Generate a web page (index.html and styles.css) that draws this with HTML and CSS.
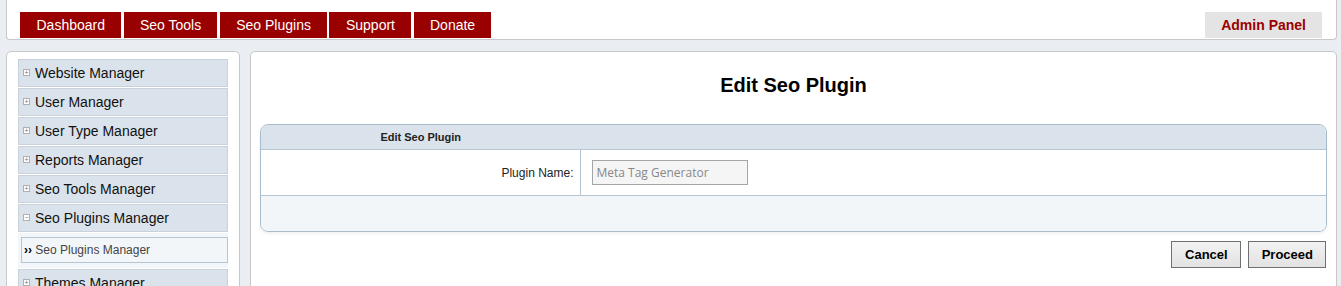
FILE: index.html
```html
<!DOCTYPE html>
<html>
<head>
  <meta charset="utf-8">
  <link rel="stylesheet" href="styles.css">
</head>
<body>
<div class="header">
  <ul class="topmenu">
    <li><a href="#">Dashboard</a></li>
    <li><a href="#">Seo Tools</a></li>
    <li><a href="#">Seo Plugins</a></li>
    <li><a href="#">Support</a></li>
    <li><a href="#">Donate</a></li>
  </ul>
  <a class="adminpanel" href="#">Admin Panel</a>
</div>
<div class="wrap">
  <div class="sidebar">
    <div class="menuitem"><span class="tog">+</span>Website Manager</div>
    <div class="menuitem"><span class="tog">+</span>User Manager</div>
    <div class="menuitem"><span class="tog">+</span>User Type Manager</div>
    <div class="menuitem"><span class="tog">+</span>Reports Manager</div>
    <div class="menuitem"><span class="tog">+</span>Seo Tools Manager</div>
    <div class="menuitem"><span class="tog">&minus;</span>Seo Plugins Manager</div>
    <div class="submenu">
      <div class="subitem"><b>&rsaquo;&rsaquo;</b> Seo Plugins Manager</div>
    </div>
    <div class="menuitem"><span class="tog">+</span>Themes Manager</div>
  </div>
  <div class="content">
    <h1>Edit Seo Plugin</h1>
    <table class="list">
      <tr class="listHead">
        <td class="left">Edit Seo Plugin</td>
        <td class="right"></td>
      </tr>
      <tr class="white_row">
        <td class="td_left_col">Plugin Name:</td>
        <td class="td_right_col"><input type="text" value="Meta Tag Generator" readonly></td>
      </tr>
      <tr class="blue_row">
        <td class="td_bottom" colspan="2"></td>
      </tr>
    </table>
    <div class="actions">
      <button>Cancel</button>
      <button>Proceed</button>
    </div>
  </div>
</div>
</body>
</html>
```

FILE: styles.css
```css
      body{
        margin:0;
        padding:0 4px 0 6px;
        background:#eaeef3;
        font-family:"Liberation Sans", Arial, sans-serif;
        color:#000;
      }
      div.header{
        background:#fff;
        border:1px solid #c8c8c8;
        border-top:none;
        border-radius:0 0 4px 4px;
        height:39px;
        display:flex;
        justify-content:space-between;
        align-items:flex-end;
        padding:0 14px 0 13px;
      }
      ul.topmenu{
        list-style:none;
        margin:0 0 1px 0;
        padding:0;
        display:flex;
        gap:2.5px;
      }
      ul.topmenu a{
        display:block;
        background:#990000;
        color:#fff;
        text-decoration:none;
        font-size:14px;
        height:26px;
        line-height:26px;
        padding:0 16px 0 16.5px;
      }
      a.adminpanel{
        display:block;
        background:#e4e4e4;
        color:#990000;
        font-weight:bold;
        font-size:14px;
        text-decoration:none;
        height:26px;
        line-height:26px;
        padding:0 16px;
        margin-bottom:1px;
      }

      div.wrap{
        display:flex;
        gap:10px;
        margin-top:11px;
        align-items:flex-start;
      }
      div.sidebar{
        width:210px;
        background:#fff;
        border:1px solid #c8c8c8;
        border-radius:5px;
        padding:7px 11px 10px 11px;
        flex:none;
      }
      div.menuitem{
        background:#dae3eb;
        border:1px solid #c9d2da;
        height:26px;
        line-height:26px;
        font-size:14px;
        margin-bottom:1px;
        padding-left:4px;
        color:#111;
      }
      span.tog{
        display:inline-block;
        width:5px;
        height:5px;
        line-height:5px;
        border:1px solid #b0b0b0;
        font-size:7px;
        color:#777;
        text-align:center;
        margin-right:5px;
        background:#fff;
        vertical-align:2px;
        overflow:hidden;
      }
      div.submenu{
        background:#f3f6f9;
        padding:4px 0 5px 3px;
        margin-bottom:1px;
      }
      div.subitem{
        border:1px solid #b4c6d2;
        height:24px;
        line-height:24px;
        font-size:12px;
        color:#444;
        padding-left:2px;
      }
      div.subitem b{
        color:#000;
        font-size:12px;
      }

      div.content{
        flex:1;
        background:#fff;
        border:1px solid #c8c8c8;
        border-radius:5px;
        padding:0 9px 20px 9px;
        min-height:240px;
      }
      h1{
        font-size:20px;
        text-align:center;
        margin:22px 0 27px 0;
        line-height:23px;
      }
      table.list{
        width:100%;
        border-collapse:separate;
        border-spacing:0;
        border:1px solid #a9bccb;
        border-radius:8px;
        overflow:hidden;
        box-shadow:0 2px 3px rgba(0,0,0,0.06);
      }
      table.list td{
        padding:0;
      }
      tr.listHead td{
        background:#dae3eb;
        height:24px;
        font-size:11px;
        font-weight:bold;
        color:#222;
        border-bottom:1px solid #b4c6d2;
      }
      tr.listHead td.left{
        width:30%;
        text-align:center;
      }
      tr.white_row td{
        height:45px;
        border-bottom:1px solid #b4c6d2;
      }
      table.list td.td_left_col{
        text-align:right;
        font-size:12px;
        color:#222;
        padding-right:6px;
        border-right:1px solid #b4c6d2;
      }
      table.list td.td_right_col{
        padding-left:11px;
      }
      td.td_right_col input{
        box-sizing:border-box;
        width:156px;
        height:25px;
        border:1px solid #a6a6a6;
        background:#f5f5f5;
        font-family:"Open Sans", sans-serif;
        font-size:12px;
        color:#888;
        padding:0 4px;
        margin:0;
        display:block;
      }
      tr.blue_row td{
        background:#f3f6f9;
        height:35px;
      }
      div.actions{
        display:flex;
        justify-content:flex-end;
        gap:7px;
        margin-top:9px;
        padding-right:1px;
      }
      div.actions button{
        height:27px;
        border:1px solid #707070;
        background:linear-gradient(#f2f2f2,#e2e2e2);
        font-family:"Liberation Sans", Arial, sans-serif;
        font-weight:bold;
        font-size:13px;
        padding:0 12px 0 13px;
        color:#000;
      }
```
